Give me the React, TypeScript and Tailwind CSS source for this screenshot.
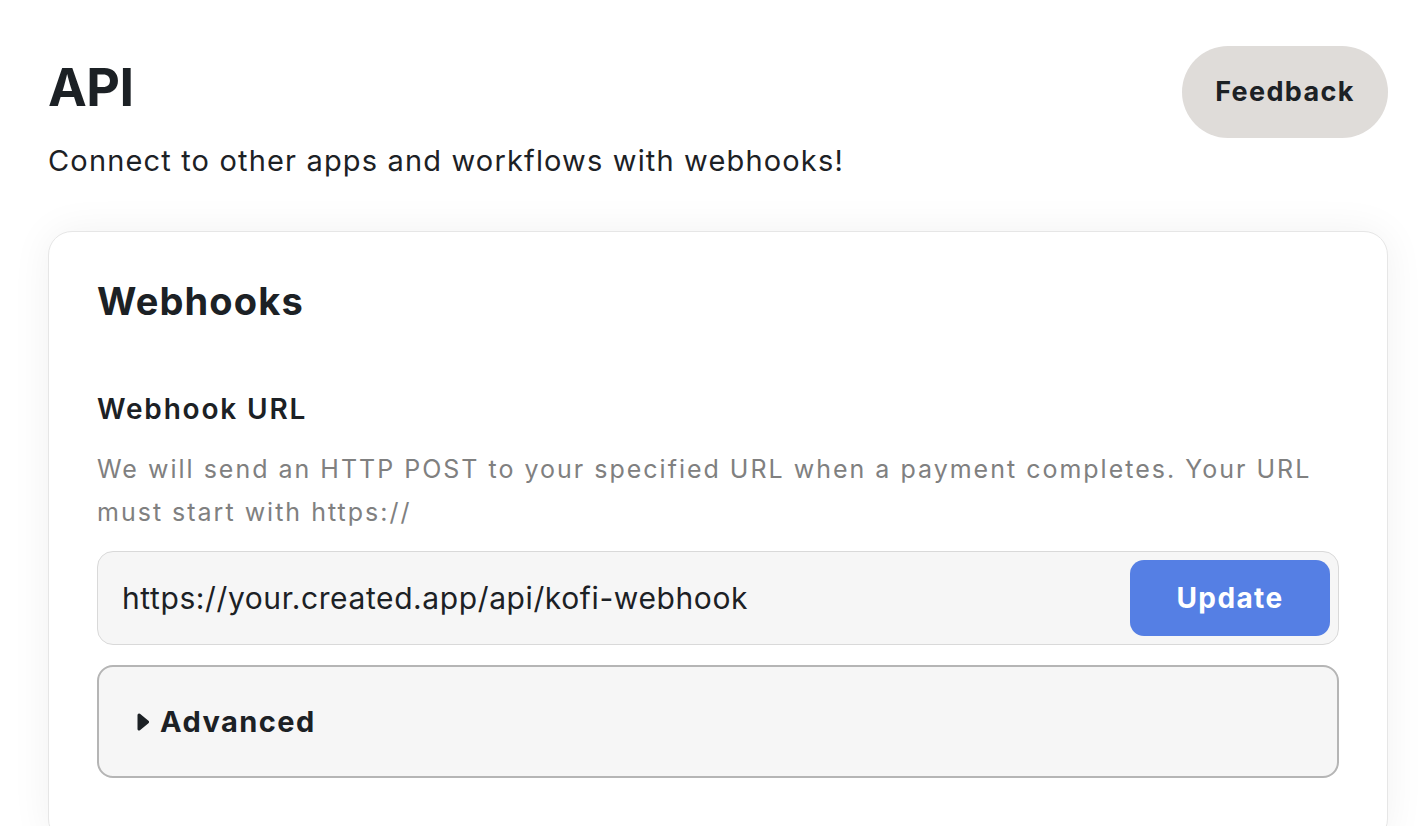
import React from 'react';

const App: React.FC = () => {
  return (
    <div
      className="min-h-screen bg-white text-[#1c2125] overflow-hidden"
      style={{ fontFamily: 'Inter, "Noto Sans", sans-serif' }}
    >
      <div className="pl-12 pr-8 pt-[46px]">
        {/* Header */}
        <div className="flex items-start justify-between">
          <div>
            <h1 className="text-[52px] font-bold leading-none mt-[16px] tracking-[-0.01em]">API</h1>
            <p className="text-[29px] leading-none mt-[32px] tracking-[0.04em]">
              Connect to other apps and workflows with webhooks!
            </p>
          </div>
          <button className="h-[92px] w-[206px] rounded-full bg-[#dfdcd9] text-[27px] font-bold tracking-[0.05em] text-[#1c2125]">
            Feedback
          </button>
        </div>

        {/* Card */}
        <div className="mt-[56px] rounded-[24px] border border-[#e6e6e6] bg-white px-12 pt-[50px] pb-16 shadow-[0_0_40px_rgba(0,0,0,0.06)]">
          <h2 className="text-[38px] font-bold leading-none tracking-[0.03em]">Webhooks</h2>

          <div className="mt-[75px]">
            <div className="text-[28px] font-semibold leading-none tracking-[0.065em]">Webhook URL</div>
            <p className="mt-[25px] text-[25px] leading-[43px] text-[#808080] tracking-[0.08em]">
              We will send an HTTP POST to your specified URL when a payment completes. Your URL must start with
              https://
            </p>

            <div className="mt-[17px] flex h-[94px] items-center rounded-[16px] border border-[#d9d9d9] bg-[#f6f6f6] pl-6 pr-2">
              <span className="flex-1 text-[30px] text-[#1c2125] tracking-[0.02em]">
                https://your.created.app/api/kofi-webhook
              </span>
              <button className="h-[76px] w-[200px] rounded-[14px] bg-[#557fe4] text-[28px] font-bold tracking-[0.05em] text-white">
                Update
              </button>
            </div>

            <div className="mt-[20px] flex h-[113px] items-center gap-[11px] rounded-[16px] border-2 border-[#b5b5b5] bg-[#f6f6f6] pl-[38px]">
              <svg width="12" height="18" viewBox="0 0 12 18" className="shrink-0">
                <path d="M2 2 L10.5 9 L2 16 Z" fill="#1c2125" stroke="#1c2125" strokeWidth="3" strokeLinejoin="round" />
              </svg>
              <span className="text-[29px] font-bold tracking-[0.05em]">Advanced</span>
            </div>
          </div>
        </div>
      </div>
    </div>
  );
};

export default App;
